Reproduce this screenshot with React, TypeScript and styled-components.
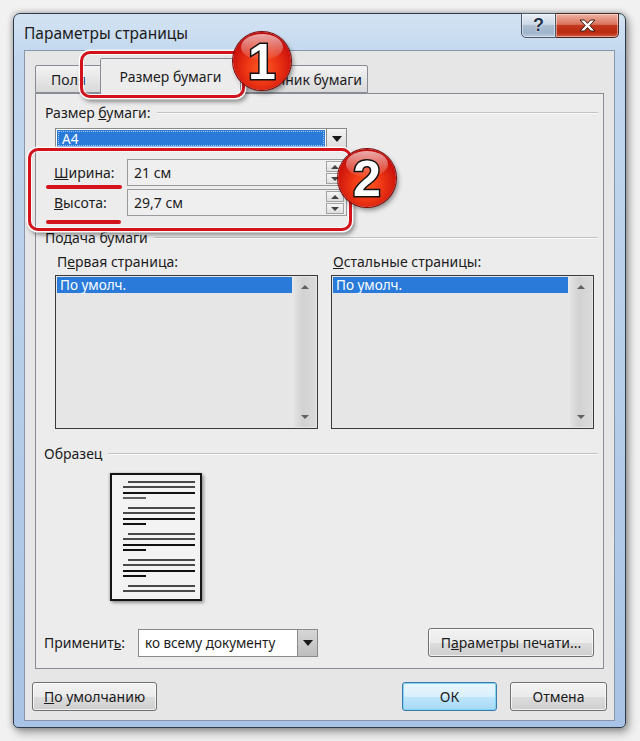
import React from "react";
import styled, { createGlobalStyle } from "styled-components";

const GlobalStyle = createGlobalStyle`
  html, body {
    margin: 0;
    padding: 0;
  }
  body {
    background: #f1f1f1;
    font-family: "Noto Sans", "Open Sans", sans-serif;
    font-size: 14px;
    color: #1c1c1c;
  }
  * {
    box-sizing: border-box;
  }
`;

const Stage = styled.div`
  position: relative;
  width: 640px;
  height: 741px;
  padding: 13px 0 0 13px;
  overflow: hidden;
`;

const Window = styled.div`
  width: 613px;
  height: 715px;
  border: 1px solid #2f3b48;
  border-radius: 7px 7px 5px 5px;
  background: linear-gradient(
    180deg,
    #d3e3f3 0%,
    #c2d7ee 6%,
    #b6cde9 55%,
    #a8c3e5 100%
  );
  box-shadow: 0 0 6px rgba(0, 0, 0, 0.35), 3px 5px 10px rgba(0, 0, 0, 0.3);
  display: flex;
  flex-direction: column;
`;

const TitleBar = styled.div`
  height: 36px;
  display: flex;
  align-items: center;
  padding: 0 6px 0 10px;
`;

const Title = styled.div`
  flex: 1;
  font-size: 15.5px;
  color: #1b1b1b;
  padding-top: 2px;
`;

const Controls = styled.div`
  align-self: flex-start;
  display: flex;
  margin-top: -1px;
`;

const CaptionButton = styled.div<{ $close?: boolean }>`
  height: 25px;
  width: ${(p) => (p.$close ? 63 : 35)}px;
  display: flex;
  align-items: center;
  justify-content: center;
  border: 1px solid ${(p) => (p.$close ? "#4a2620" : "#4a586a")};
  border-left-width: ${(p) => (p.$close ? 0 : 1)}px;
  border-radius: ${(p) => (p.$close ? "0 0 5px 0" : "0 0 0 5px")};
  background: ${(p) =>
    p.$close
      ? "linear-gradient(180deg, #eeb3a4 0%, #d9735c 45%, #c2381d 50%, #b92a12 80%, #d1583b 100%)"
      : "linear-gradient(180deg, #e9eff6 0%, #cbd8e6 45%, #aebfd3 50%, #9fb3ca 80%, #b9cade 100%)"};
  box-shadow: inset 0 0 0 1px rgba(255, 255, 255, 0.45);
  font-family: "Liberation Sans", Arial, sans-serif;
  font-weight: 700;
  font-size: 18px;
  color: #22324a;
  text-shadow: 0 0 2px #fff, 0 0 1px #fff;
`;

const Client = styled.div`
  margin: 0 10px;
  height: 671px;
  border: 1px solid #8796aa;
  background: #e6e6e6;
  padding: 7px 10px 9px 10px;
  display: flex;
  flex-direction: column;
`;

const TabStrip = styled.div`
  height: 35px;
  display: flex;
  align-items: flex-end;
`;

const Tab = styled.div<{ $active?: boolean; $w: number }>`
  position: relative;
  width: ${(p) => p.$w}px;
  height: ${(p) => (p.$active ? 36 : 28)}px;
  margin: 0 ${(p) => (p.$active ? -2 : 0)}px ${(p) => (p.$active ? -1 : 0)}px
    ${(p) => (p.$active ? -2 : 0)}px;
  z-index: ${(p) => (p.$active ? 2 : 1)};
  border: 1px solid #898c95;
  border-bottom: ${(p) => (p.$active ? "none" : "1px solid #898c95")};
  border-radius: 2px 2px 0 0;
  background: ${(p) =>
    p.$active
      ? "#ececec"
      : "linear-gradient(180deg, #f3f3f3 0%, #e6e6e6 50%, #d9d9d9 100%)"};
  display: flex;
  align-items: center;
  justify-content: center;
  color: #1c1c1c;
  white-space: nowrap;
  padding-bottom: ${(p) => (p.$active ? 1 : 0)}px;
`;

const TabPanel = styled.div`
  flex: 1;
  border: 1px solid #898c95;
  background: #ececec;
  padding: 9px 9px 11px 9px;
  display: flex;
  flex-direction: column;
`;

const GroupHeader = styled.div<{ $top?: number; $shift?: number }>`
  display: flex;
  align-items: center;
  height: 18px;
  gap: 6px;
  margin-top: ${(p) => p.$top ?? 0}px;
  margin-left: ${(p) => p.$shift ?? 0}px;
  white-space: nowrap;

  &::after {
    content: "";
    flex: 1;
    height: 1px;
    margin-right: -4px;
    background: #c3c3c3;
    box-shadow: 0 1px 0 #fafafa;
  }
`;

const Combo = styled.div<{ $w: number; $h: number }>`
  width: ${(p) => p.$w}px;
  height: ${(p) => p.$h}px;
  border: 1px solid #8a8a8a;
  background: #ffffff;
  display: flex;
  align-items: stretch;
`;

const ComboValue = styled.div<{ $selected?: boolean }>`
  flex: 1;
  margin: 1px;
  padding-left: 5px;
  display: flex;
  align-items: center;
  font-size: 13.5px;
  color: ${(p) => (p.$selected ? "#ffffff" : "#1c1c1c")};
  background: ${(p) => (p.$selected ? "#2a7bd9" : "transparent")};
  outline: ${(p) => (p.$selected ? "1px dotted rgba(255,255,255,0.6)" : "none")};
  outline-offset: -2px;
`;

const ComboArrow = styled.div<{ $dark?: boolean }>`
  width: 20px;
  border-left: 1px solid #8a8a8a;
  background: ${(p) =>
    p.$dark
      ? "linear-gradient(180deg, #d6d6d6, #bdbdbd)"
      : "linear-gradient(180deg, #f4f4f4, #dcdcdc)"};
  display: flex;
  align-items: center;
  justify-content: center;

  &::after {
    content: "";
    border-left: 5px solid transparent;
    border-right: 5px solid transparent;
    border-top: 6px solid #1a1a1a;
  }
`;

const PaperCombo = styled(Combo)`
  margin: 7px 0 0 10px;
`;

const FieldRow = styled.div<{ $top: number }>`
  display: flex;
  align-items: center;
  margin: ${(p) => p.$top}px 0 0 9px;
`;

const FieldLabel = styled.div`
  width: 73px;
`;

const SpinBox = styled.div`
  width: 220px;
  height: 27px;
  border: 1px solid #9a9a9a;
  background: #efefef;
  display: flex;
  align-items: center;
  padding-left: 6px;
`;

const SpinValue = styled.div`
  flex: 1;
  font-size: 14px;
`;

const SpinButtons = styled.div`
  width: 18px;
  height: 23px;
  margin-right: 2px;
  display: flex;
  flex-direction: column;
  gap: 1px;
`;

const SpinArrow = styled.div<{ $down?: boolean }>`
  flex: 1;
  border: 1px solid #a4a4a4;
  background: linear-gradient(180deg, #f6f6f6, #dedede);
  display: flex;
  align-items: center;
  justify-content: center;

  &::after {
    content: "";
    border-left: 4px solid transparent;
    border-right: 4px solid transparent;
    ${(p) =>
      p.$down ? "border-top: 4px solid #444;" : "border-bottom: 4px solid #444;"}
  }
`;

const ListsRow = styled.div`
  display: flex;
  gap: 13px;
  margin: 7px 0 0 10px;
`;

const ListColumn = styled.div`
  width: 264px;
  display: flex;
  flex-direction: column;
  gap: 4px;
`;

const ListLabel = styled.div`
  height: 18px;
  line-height: 18px;
  padding-left: 2px;
`;

const ListBox = styled.div`
  height: 154px;
  border: 1px solid #3a3a3a;
  background: #e6e6e6;
  display: flex;
`;

const ListItems = styled.div`
  flex: 1;
  padding: 1px;
`;

const ListItem = styled.div<{ $selected?: boolean }>`
  height: 16px;
  line-height: 16px;
  padding-left: 3px;
  font-size: 13.5px;
  color: ${(p) => (p.$selected ? "#ffffff" : "#1c1c1c")};
  background: ${(p) => (p.$selected ? "#2a7bd9" : "transparent")};
`;

const ScrollTrack = styled.div`
  width: 22px;
  margin: 1px;
  background: linear-gradient(90deg, #e2e2e2, #d2d2d2 40%, #dadada);
  display: flex;
  flex-direction: column;
  justify-content: space-between;
  align-items: center;
  padding: 4px 0;
`;

const ScrollArrow = styled.div<{ $down?: boolean }>`
  width: 0;
  height: 0;
  border-left: 4px solid transparent;
  border-right: 4px solid transparent;
  ${(p) =>
    p.$down ? "border-top: 4px solid #606060;" : "border-bottom: 4px solid #606060;"}
  margin: 4px 0;
`;

const Preview = styled.div`
  margin: 11px 0 0 65px;
`;

const PageSheet = styled.div`
  width: 92px;
  height: 128px;
  border: 2px solid #151515;
  background: #f3f3f3;
  box-shadow: 2px 2px 3px rgba(0, 0, 0, 0.35), -1px 0 2px rgba(0, 0, 0, 0.2);
`;

const ApplyRow = styled.div`
  display: flex;
  align-items: center;
  margin: 27px 0 0 -1px;
`;

const ApplyLabel = styled.div`
  width: 94px;
`;

const Spacer = styled.div`
  flex: 1;
`;

const PushButton = styled.div<{ $w: number; $default?: boolean }>`
  width: ${(p) => p.$w}px;
  height: 29px;
  border: 1px solid ${(p) => (p.$default ? "#3d7bad" : "#707070")};
  border-radius: 3px;
  background: ${(p) =>
    p.$default
      ? "linear-gradient(180deg, #eaf6fd 0%, #d9f0fc 50%, #bee6fd 50%, #a7d9f5 100%)"
      : "linear-gradient(180deg, #f2f2f2 0%, #ebebeb 50%, #dddddd 50%, #cfcfcf 100%)"};
  box-shadow: inset 0 0 0 1px
    ${(p) => (p.$default ? "rgba(120, 210, 240, 0.9)" : "rgba(255, 255, 255, 0.7)")};
  display: flex;
  align-items: center;
  justify-content: center;
  font-size: 14px;
  color: #1c1c1c;
`;

const Footer = styled.div`
  display: flex;
  gap: 13px;
  margin: 13px -3px 0 -3px;
`;

const Callout = styled.div`
  position: absolute;
  border: 3px solid #d2131c;
  border-radius: 10px;
  box-shadow: 0 0 0 1.5px rgba(255, 255, 255, 0.95),
    2px 3px 4px 1px rgba(0, 0, 0, 0.4),
    inset 0 0 0 1px rgba(255, 255, 255, 0.7);
  pointer-events: none;
  z-index: 5;
`;

const Underline = styled.div`
  position: absolute;
  height: 4px;
  border-radius: 2px;
  background: #d2131c;
  z-index: 5;
`;

const Badge = styled.div`
  position: absolute;
  width: 58px;
  height: 58px;
  border-radius: 50%;
  background: radial-gradient(
    circle at 50% 62%,
    #ff5a26 0%,
    #ec3514 35%,
    #c80f0b 70%,
    #9a0707 100%
  );
  box-shadow: 0 0 0 1px #7a0808, 2px 3px 5px rgba(0, 0, 0, 0.45);
  display: flex;
  align-items: center;
  justify-content: center;
  font-family: "Liberation Sans", Arial, sans-serif;
  font-weight: 700;
  font-size: 50px;
  line-height: 58px;
  color: #ffffff;
  -webkit-text-stroke: 3px #111;
  paint-order: stroke fill;
  z-index: 6;

  &::before {
    content: "";
    position: absolute;
    left: 8px;
    right: 8px;
    top: 2px;
    height: 26px;
    border-radius: 50%;
    background: linear-gradient(
      180deg,
      rgba(255, 255, 255, 0.65),
      rgba(255, 255, 255, 0.05)
    );
  }

  span {
    position: relative;
    padding-top: 2px;
  }
`;

const paragraphs = [0, 26, 52, 78];

const SampleLines: React.FC = () => (
  <svg width="88" height="124" viewBox="0 0 88 124">
    <g stroke="#111" strokeLinecap="butt">
      {paragraphs.map((dy) => (
        <g key={dy}>
          <line x1="16" x2="83" y1={7 + dy} y2={7 + dy} strokeWidth="1.3" />
          <line x1="11" x2="83" y1={12 + dy} y2={12 + dy} strokeWidth="1.3" />
          <line x1="11" x2="83" y1={18 + dy} y2={18 + dy} strokeWidth="2" />
          <line x1="11" x2="34" y1={23 + dy} y2={23 + dy} strokeWidth={dy ? 2 : 1.3} />
        </g>
      ))}
      <line x1="16" x2="83" y1="111" y2="111" strokeWidth="1.3" />
      <line x1="11" x2="83" y1="116" y2="116" strokeWidth="1.3" />
    </g>
  </svg>
);

const CloseGlyph: React.FC = () => (
  <svg width="17" height="13" viewBox="0 0 17 13">
    <path
      d="M1 1h4.5l3 3.4 3-3.4H16l-5.2 5.5L16 12h-4.5l-3-3.4-3 3.4H1l5.2-5.5z"
      fill="#ffffff"
      stroke="#3a1a14"
      strokeWidth="1"
      strokeLinejoin="round"
    />
  </svg>
);

export default function App() {
  return (
    <>
      <GlobalStyle />
      <Stage>
        <Window>
          <TitleBar>
            <Title>Параметры страницы</Title>
            <Controls>
              <CaptionButton>?</CaptionButton>
              <CaptionButton $close>
                <CloseGlyph />
              </CaptionButton>
            </Controls>
          </TitleBar>
          <Client>
            <TabStrip>
              <Tab $w={67}>Поля</Tab>
              <Tab $w={141} $active>
                Размер бумаги
              </Tab>
              <Tab $w={129}>Источник бумаги</Tab>
            </TabStrip>
            <TabPanel>
              <GroupHeader>
                <span>
                  Размер <u>б</u>умаги:
                </span>
              </GroupHeader>
              <PaperCombo $w={292} $h={21}>
                <ComboValue $selected>A4</ComboValue>
                <ComboArrow />
              </PaperCombo>
              <FieldRow $top={10}>
                <FieldLabel>
                  <u>Ш</u>ирина:
                </FieldLabel>
                <SpinBox>
                  <SpinValue>21 см</SpinValue>
                  <SpinButtons>
                    <SpinArrow />
                    <SpinArrow $down />
                  </SpinButtons>
                </SpinBox>
              </FieldRow>
              <FieldRow $top={3}>
                <FieldLabel>
                  <u>В</u>ысота:
                </FieldLabel>
                <SpinBox>
                  <SpinValue>29,7 см</SpinValue>
                  <SpinButtons>
                    <SpinArrow />
                    <SpinArrow $down />
                  </SpinButtons>
                </SpinBox>
              </FieldRow>
              <GroupHeader $top={12}>
                <span>Подача бумаги</span>
              </GroupHeader>
              <ListsRow>
                <ListColumn>
                  <ListLabel>
                    П<u>е</u>рвая страница:
                  </ListLabel>
                  <ListBox>
                    <ListItems>
                      <ListItem $selected>По умолч.</ListItem>
                    </ListItems>
                    <ScrollTrack>
                      <ScrollArrow />
                      <ScrollArrow $down />
                    </ScrollTrack>
                  </ListBox>
                </ListColumn>
                <ListColumn>
                  <ListLabel>
                    <u>О</u>стальные страницы:
                  </ListLabel>
                  <ListBox>
                    <ListItems>
                      <ListItem $selected>По умолч.</ListItem>
                    </ListItems>
                    <ScrollTrack>
                      <ScrollArrow />
                      <ScrollArrow $down />
                    </ScrollTrack>
                  </ListBox>
                </ListColumn>
              </ListsRow>
              <GroupHeader $top={15} $shift={-1}>
                <span>Образец</span>
              </GroupHeader>
              <Preview>
                <PageSheet>
                  <SampleLines />
                </PageSheet>
              </Preview>
              <ApplyRow>
                <ApplyLabel>
                  Применит<u>ь</u>:
                </ApplyLabel>
                <Combo $w={180} $h={28}>
                  <ComboValue>ко всему документу</ComboValue>
                  <ComboArrow $dark />
                </Combo>
                <Spacer />
                <PushButton $w={166}>
                  П<u>а</u>раметры печати...
                </PushButton>
              </ApplyRow>
            </TabPanel>
            <Footer>
              <PushButton $w={125}>
                <span>
                  <u>П</u>о умолчанию
                </span>
              </PushButton>
              <Spacer />
              <PushButton $w={95} $default>
                ОК
              </PushButton>
              <PushButton $w={97}>Отмена</PushButton>
            </Footer>
          </Client>
        </Window>

        <Callout style={{ left: 80, top: 51, width: 165, height: 47 }} />
        <Badge style={{ left: 233, top: 32 }}>
          <span>1</span>
        </Badge>
        <Callout style={{ left: 28, top: 148, width: 324, height: 83 }} />
        <Underline style={{ left: 46, top: 185, width: 76 }} />
        <Underline style={{ left: 46, top: 220, width: 75 }} />
        <Badge style={{ left: 338, top: 149 }}>
          <span>2</span>
        </Badge>
      </Stage>
    </>
  );
}
